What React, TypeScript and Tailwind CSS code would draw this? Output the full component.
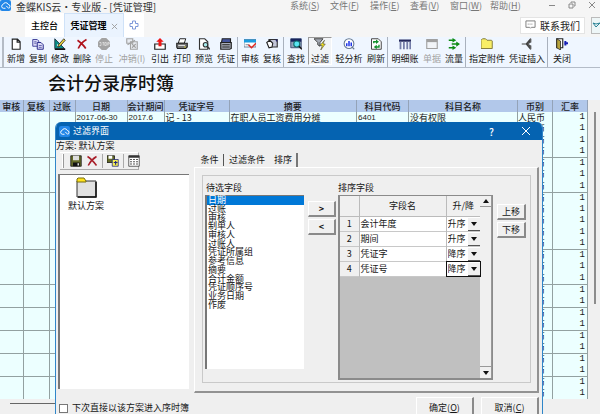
import type { ReactNode } from "react";
import clsx from "clsx";

const menus = [
  ["系统", "S"],
  ["文件", "F"],
  ["操作", "E"],
  ["查看", "V"],
  ["窗口", "W"],
  ["帮助", "H"],
];

function Icon({ children }: { children: ReactNode }) {
  return (
    <svg viewBox="0 0 16 16" className="h-3 w-3 shrink-0" fill="none" aria-hidden="true">
      {children}
    </svg>
  );
}

function CloudIcon() {
  return (
    <svg viewBox="0 0 16 16" className="h-[11px] w-[11px] shrink-0" fill="none" aria-hidden="true">
      <rect width="16" height="16" rx="3" fill="#2387e8" />
      <path d="M8 12H5a2.800 2.800 0 0 1-.5-5.500A4 4 0 0 1 12 6.500a2.800 2.800 0 0 1 .5 5.500L9 8.500" stroke="#fff" strokeWidth="1.400" />
    </svg>
  );
}

const icons: Record<string, ReactNode> = {
  add: <path d="M3 1.5h7l3.500 3.500v10H3zM9.500 1.500v4h4" fill="#fff" stroke="#222" strokeWidth="1.500" />,
  copy: (
    <>
      <path d="M1 2h6l2 2v7H1z" fill="#d9d9f5" stroke="#46469c" strokeWidth="1.300" />
      <path d="M7 6h5l3 3v6H7z" fill="#d9d9f5" stroke="#2b2b8c" strokeWidth="1.300" />
      <path d="M3 5h3M3 7h3M9 10h4M9 12.500h4" stroke="#46469c" />
    </>
  ),
  edit: (
    <>
      <path d="M1 1v13h13z" fill="#0c8d86" stroke="#123" />
      <path d="M4 8v3h4z" fill="#eff6ff" />
      <path d="M6 9l7-8 2 2-7 8-3 1z" fill="#e8cf3c" stroke="#222" />
      <path d="M1 15h14" stroke="#111" strokeWidth="2" />
    </>
  ),
  remove: <path d="M2 3c4 3 8 6 11 11M14 2C9 5 5 9 3 14" stroke="#b0141d" strokeWidth="2.200" />,
  stop: (
    <>
      <path d="M5 0h6l5 5v6l-5 5H5l-5-5V5z" fill="#a3a3a3" />
      <path d="M2 6h2v4H2M6 6h2M7 6v4M9 6h2v4H9zM13 10V6h2v2h-2" stroke="#e6e6e6" />
    </>
  ),
  reverse: (
    <>
      <path d="M1 1h8v6H1zM6 5h9v10H6z" fill="#e9edf3" stroke="#a2a2a2" strokeWidth="1.500" />
      <path d="M2 9l10-6M8 8l5 5M13 8l-5 5" stroke="#a2a2a2" strokeWidth="1.500" />
    </>
  ),
  exportOut: (
    <>
      <path d="M1 8h14v7H1z" fill="#fff" stroke="#222" strokeWidth="1.600" />
      <path d="M8 0l5 5h-3v6H6V5H3z" fill="#ef1616" />
    </>
  ),
  print: (
    <>
      <path d="M5 1h8l-2 6H3z" fill="#fff" stroke="#222" strokeWidth="1.300" />
      <path d="M1 7h14v5l-2 2H2l-1-2z" fill="#777" stroke="#222" strokeWidth="1.500" />
      <path d="M3 10h9" stroke="#fff" />
      <path d="M11 12h2" stroke="#e4d92b" strokeWidth="1.500" />
    </>
  ),
  preview: (
    <>
      <path d="M2 1h7l4 4v10H2z" fill="#fff" stroke="#333" strokeWidth="1.500" />
      <circle cx="10" cy="9" r="3" fill="#a8eced" stroke="#333" strokeWidth="1.500" />
      <path d="M12 11l4 4" stroke="#333" strokeWidth="2" />
    </>
  ),
  voucher: (
    <>
      <path d="M3 1h11v5H2z" fill="#44549c" stroke="#222" strokeWidth="1.500" />
      <path d="M1 6h14v8l-2 1H1z" fill="#a9adb9" stroke="#222" strokeWidth="1.600" />
      <path d="M3 9h10M3 12h10" stroke="#222" strokeWidth="1.500" />
    </>
  ),
  audit: (
    <>
      <path d="M0 2h16v10H0z" fill="#fff" stroke="#45617e" />
      <path d="M0 2h16v4H0z" fill="#1b9de0" />
      <path d="M2 9h5" stroke="#53637a" />
      <path d="M6 9l4 4 6-6" stroke="#e02b24" strokeWidth="2" />
    </>
  ),
  recheck: (
    <>
      <path d="M4 2h11v10H6z" fill="#c3c6d8" stroke="#333" strokeWidth="1.500" />
      <path d="M1 6l4-3 4 4-1 5-4 1z" fill="#fff" stroke="#222" strokeWidth="1.500" />
      <path d="M12 2h3v4z" fill="#26246f" />
    </>
  ),
  find: (
    <>
      <path d="M1 1h14v12H1z" fill="#8fa0b8" stroke="#27335c" />
      <path d="M1 1h14v4H1z" fill="#17245d" />
      <circle cx="9" cy="8" r="4" fill="#59e5f3" stroke="#14706f" strokeWidth="1.500" />
      <path d="M12 11l4 4" stroke="#111" strokeWidth="2" />
    </>
  ),
  filter: (
    <>
      <path d="M0 1h12L8 6v5L5 9V6z" fill="#a6abb5" stroke="#444" strokeWidth="1.300" />
      <path d="M14 3L8 10h3l-2 6 6-8h-3z" fill="#f7e71c" stroke="#333" strokeWidth=".7" />
    </>
  ),
  analyze: (
    <>
      <circle cx="8" cy="7.500" r="6.500" fill="#fff" stroke="#667991" strokeWidth="1.400" />
      <path d="M5 11V7M8 11V4M11 11V6" stroke="#2037e7" strokeWidth="2" />
      <path d="M12 12l3 3" stroke="#667991" strokeWidth="1.500" />
    </>
  ),
  refresh: (
    <>
      <path d="M2 1h9l4 4v10H2z" fill="#fff" stroke="#444" strokeWidth="1.300" />
      <path d="M5 7V5h4M12 9v3H8" stroke="#12912c" strokeWidth="1.800" />
      <path d="M8 2l4 3-4 3zM9 9l-4 3 4 3z" fill="#12912c" />
    </>
  ),
  ledger: (
    <>
      <path d="M0 2h16v3H0z" fill="#24285d" />
      <path d="M2 5v10M6.500 5v10M11 5v10M15 5v10" stroke="#747da9" strokeWidth="2.400" />
    </>
  ),
  bill: (
    <>
      <path d="M1 2h14v12H1z" fill="#f1f4f8" stroke="#a0a0a0" strokeWidth="1.500" />
      <path d="M1 4h14" stroke="#a0a0a0" strokeWidth="3" />
    </>
  ),
  flow: (
    <>
      <path d="M1 3h6M1 13h6M5 8h7" stroke="#0d8b12" strokeWidth="2.200" />
      <path d="M6 0l5 3-5 3zM6 10l5 3-5 3zM11 4.500l5 3.500-5 3.500z" fill="#0d8b12" />
    </>
  ),
  folder: <path d="M0 3l2-2h4l2 2h6l1 1v10H0z" fill="#f8ee67" stroke="#857c3c" strokeWidth="1.300" />,
  insert: (
    <>
      <path d="M1 8h6M7 8l5-6v4L8 8l4 2v4z" fill="#777" stroke="#444" strokeWidth="1.600" />
      <path d="M13 1v5M13 10v5" stroke="#555" strokeWidth="1.600" />
    </>
  ),
  exit: (
    <>
      <path d="M1 1h8v12H1z" fill="#fff" stroke="#222" strokeWidth="1.500" />
      <path d="M1 1l5 3v12l-5-3z" fill="#b7a33d" stroke="#222" />
      <path d="M16 7h-5M12.500 4v6" stroke="#1720b5" strokeWidth="2.600" />
    </>
  ),
};

type Tool = { label: string; icon: string; width: string; off?: boolean; pressed?: boolean };

// Groups are divided by a thin etched line
const toolGroups: Tool[][] = [
  [
    { label: "新增", icon: "add", width: "w-[22px]" },
    { label: "复制", icon: "copy", width: "w-[22px]" },
    { label: "修改", icon: "edit", width: "w-[22px]" },
    { label: "删除", icon: "remove", width: "w-[22px]" },
    { label: "停止", icon: "stop", width: "w-[22px]", off: true },
    { label: "冲销(I)", icon: "reverse", width: "w-[34px]", off: true },
    { label: "引出", icon: "exportOut", width: "w-[22px]" },
    { label: "打印", icon: "print", width: "w-[22px]" },
    { label: "预览", icon: "preview", width: "w-[22px]" },
    { label: "凭证", icon: "voucher", width: "w-[22px]" },
  ],
  [
    { label: "审核", icon: "audit", width: "w-[22px]" },
    { label: "复核", icon: "recheck", width: "w-[22px]" },
  ],
  [
    { label: "查找", icon: "find", width: "w-[22px]" },
    { label: "过滤", icon: "filter", width: "w-6", pressed: true },
    { label: "轻分析", icon: "analyze", width: "w-8" },
    { label: "刷新", icon: "refresh", width: "w-[22px]" },
  ],
  [
    { label: "明细账", icon: "ledger", width: "w-8" },
    { label: "单据", icon: "bill", width: "w-[22px]", off: true },
    { label: "流量", icon: "flow", width: "w-[22px]" },
  ],
  [
    { label: "指定附件", icon: "folder", width: "w-10" },
    { label: "凭证插入", icon: "insert", width: "w-10" },
  ],
  [{ label: "关闭", icon: "exit", width: "w-[26px]" }],
];

const columns = [
  { name: "审核", width: "w-[23px]" },
  { name: "复核", width: "w-[26px]" },
  { name: "过账", width: "w-[26px]" },
  { name: "日期", width: "w-[52px]" },
  { name: "会计期间", width: "w-[35px]" },
  { name: "凭证字号", width: "w-[65px]" },
  { name: "摘要", width: "" },
  { name: "科目代码", width: "w-[52px]" },
  { name: "科目名称", width: "w-[109px]" },
  { name: "币别", width: "w-[35px]" },
  { name: "汇率", width: "w-[35px]" },
];

// One entry per voucher, with the number of its lines
const vouchers = [
  { lines: 4, height: "h-[45px]" },
  { lines: 3, height: "h-[34px]" },
  { lines: 5, height: "h-14" },
  { lines: 3, height: "h-[34px]" },
  { lines: 2, height: "h-[22px]" },
  { lines: 2, height: "h-[22px]" },
  { lines: 2, height: "h-[22px]" },
  { lines: 2, height: "h-[22px]" },
  { lines: 2, height: "h-[22px]" },
];

const firstVoucher = ["", "", "", "2017-06-30", "2017.6", "记 - 13", "在职人员工资费用分摊", "6401", "没有权限"];

const fields = ["日期", "过账", "审核", "制单人", "审核人", "过账人", "凭证所属组", "参考信息", "摘要", "合计金额", "凭证顺序号", "业务日期", "作废"];

const sorts = [
  ["会计年度", "升序"],
  ["期间", "升序"],
  ["凭证字", "降序"],
  ["凭证号", "降序"],
];

function TitleBar() {
  return (
    <header className="flex h-[13px] items-start bg-[#f5f5f5] text-[#777]">
      <CloudIcon />
      <h1 className="ml-[5px] flex-1 whitespace-pre text-[10px] leading-[13px] text-[#333]">金蝶KIS云·专业版 - [凭证管理]</h1>
      <nav className="flex text-[9px] leading-[11px]">
        {menus.map(([name, key]) => (
          <a key={key} href="#menu" className="w-10 whitespace-nowrap">
            {name}(<u>{key}</u>)
          </a>
        ))}
      </nav>
      <div className="flex w-[70px] items-center justify-end gap-3 pr-1">
        <button aria-label="最小化" className="h-[10px] w-2">
          <svg viewBox="0 0 8 8" className="w-2"><path d="M1 4.500h6" stroke="#888" /></svg>
        </button>
        <button aria-label="还原" className="h-[10px] w-2">
          <svg viewBox="0 0 8 8" className="w-2" fill="none"><path d="M1 3h4v4H1zM3 2V1h4v4H6" stroke="#888" /></svg>
        </button>
        <button aria-label="关闭" className="h-[10px] w-2">
          <svg viewBox="0 0 8 8" className="w-2"><path d="M1 1l6 6M7 1L1 7" stroke="#888" /></svg>
        </button>
      </div>
    </header>
  );
}

function TabStrip() {
  return (
    <div className="flex h-6 items-stretch bg-[#f5f5f5] pl-[25px] text-[9px]">
      <button className="w-[39px] bg-white pt-0.5 font-medium">主控台</button>
      <button className="flex w-[60px] items-center justify-center gap-1 border border-b-0 border-[#cfe2f8] bg-[#eaf3fe] pt-px font-bold">
        凭证管理
        <svg viewBox="0 0 8 8" className="w-[7px]"><path d="M1 1l6 6M7 1L1 7" stroke="#999" /></svg>
      </button>
      <button aria-label="新标签" className="flex w-5 items-center justify-center bg-white">
        <svg viewBox="0 0 10 10" className="w-[10px]" fill="#fff">
          <path d="M3.500 1h3v2.500H9v3H6.500V9h-3V6.500H1v-3h2.500z" stroke="#7e98d8" />
        </svg>
      </button>
      <div className="flex flex-1 items-center justify-end gap-1.5">
        <button className="flex h-[17px] w-[65px] items-center justify-center gap-1 border border-[#e4e4e4] bg-white text-[10px] text-[#222]">
          <svg viewBox="0 0 12 10" className="w-[11px]" fill="none">
            <path d="M1 1h10v7H7L6 9 5 8H1z" stroke="#777" />
            <path d="M3 4.500h6" stroke="#777" strokeDasharray="1 1" />
          </svg>
          联系我们
        </button>
        <button aria-label="消息" className="h-[17px] w-[9px] overflow-hidden border border-r-0 border-[#bbb] bg-[#eef6f7]">
          <svg viewBox="0 0 8 14" className="w-2" fill="none"><path d="M1 5l3 4 4-4M1 5l3 1 4-1" stroke="#2a8295" /></svg>
        </button>
      </div>
    </div>
  );
}

function Toolbar() {
  return (
    <div className="flex h-[31px] overflow-hidden border-b border-[#b4bcc8] bg-[#eff6ff] pl-0.5">
      <span className="mr-px w-0.5 border-x border-[#b5bcc6]" />
      {toolGroups.map((group, i) => (
        <div key={i} className={clsx("flex shrink-0", i > 0 && "border-l border-[#a9b1bd] pl-px")}>
          {group.map((tool) => (
            <button
              key={tool.label}
              className={clsx(
                "flex shrink-0 flex-col items-center whitespace-nowrap text-[9px] leading-[14px]",
                tool.width,
                tool.pressed ? "mx-px mb-0.5 border border-b-white border-l-[#999] border-r-white border-t-[#999] bg-[#f2f4f7]" : "pt-px",
                tool.off ? "text-[#a2a2a2]" : "text-[#161616]"
              )}
            >
              <Icon>{icons[tool.icon]}</Icon>
              <span className="pt-0.5">{tool.label}</span>
            </button>
          ))}
        </div>
      ))}
    </div>
  );
}

function Ledger() {
  return (
    <div className="flex bg-[#f0f0f0]">
      <table className="min-w-0 flex-1 table-fixed border-collapse whitespace-nowrap text-[9px] leading-[11px] text-[#1b1b1b]">
        <thead>
          <tr className="h-3 bg-[#b2c8ea]">
            {columns.map((col) => (
              <th key={col.name} className={clsx("border-r border-[#94a3b8] p-0 font-medium", col.width)}>
                {col.name}
              </th>
            ))}
          </tr>
        </thead>
        <tbody>
          {vouchers.map((voucher, row) => (
            <tr key={row} className={clsx("border-b border-[#93a1a1] bg-[#ecffff] align-top last:border-b-0", voucher.height)}>
              {firstVoucher.map((text, col) => (
                <td
                  key={col}
                  className={clsx(
                    "overflow-hidden border-r border-[#93a1a1] p-0 pl-px",
                    (col === 3 || col === 4 || col === 7) && "font-['Liberation_Sans','Noto_Sans_CJK_SC',sans-serif] text-[8px]"
                  )}
                >
                  {row === 0 && text}
                </td>
              ))}
              <td className="overflow-hidden border-r border-[#93a1a1] p-0">
                <div className={clsx("flex flex-col justify-around overflow-hidden", voucher.height)}>
                  {Array.from({ length: voucher.lines }, (_, n) => (
                    <span key={n}>人民币</span>
                  ))}
                </div>
              </td>
              <td className="border-r border-[#93a1a1] p-0 pr-0.5 text-right font-['Liberation_Mono',monospace]">
                <div className={clsx("flex flex-col justify-around overflow-hidden", voucher.height)}>
                  {Array.from({ length: voucher.lines }, (_, n) => (
                    <span key={n}>1</span>
                  ))}
                </div>
              </td>
            </tr>
          ))}
        </tbody>
      </table>
      <div className="w-3 shrink-0 pl-1.5 pt-3">
        <div className="h-48 w-0.5 bg-[#8d8d8d]" />
      </div>
    </div>
  );
}

function PushButton({ children, className }: { children: ReactNode; className?: string }) {
  return (
    <button className={clsx("flex items-center justify-center border border-b-2 border-r-2 border-[#8a8a8a] border-l-white border-t-white bg-[#f0f0f0]", className)}>
      {children}
    </button>
  );
}

function SchemePane() {
  return (
    <div className="w-[138px] shrink-0">
      <p className="h-3 leading-3">方案: 默认方案</p>
      <div className="ml-1 flex h-[18px] w-[79px] items-center border-b border-r border-t border-b-[#aaa] border-r-[#aaa] border-t-white">
        <span className="ml-0.5 mr-1.5 h-[14px] w-0.5 shrink-0 border-x border-l-white border-r-[#999]" />
        <button aria-label="保存"><Icon>
          <path d="M1 1h14v14H1z" fill="#646b28" stroke="#111" />
          <path d="M4 1h8v6H4z" fill="#ddd" />
          <path d="M4 10h9v5H4z" fill="#111" />
          <path d="M10 11h2v3h-2z" fill="#ddd" />
        </Icon></button>
        <button aria-label="删除" className="ml-1"><Icon>
          <path d="M2 2c5 3 9 8 12 12M14 2C9 5 5 10 3 14" stroke="#a9202b" strokeWidth="2" />
        </Icon></button>
        <span className="mx-1 h-[14px] w-px shrink-0 bg-[#aaa]" />
        <button aria-label="另存为"><Icon>
          <path d="M0 1h10v9H0z" fill="#646b28" stroke="#111" />
          <path d="M2 1h5v4H2z" fill="#fff" />
          <path d="M7 6h8v9H7z" fill="#f7ef52" stroke="#1b2380" />
          <path d="M9 10h5M11.500 8v5" stroke="#1b2380" strokeWidth="1.500" />
        </Icon></button>
        <span className="mx-1 h-[14px] w-px shrink-0 bg-[#aaa]" />
        <button aria-label="列表"><Icon>
          <path d="M1 1h14v14H1z" fill="#fff" stroke="#333" />
          <path d="M1 2h14" stroke="#333" strokeWidth="3" />
          <path d="M3 6h2M7 6h2M11 6h2M3 9h2M7 9h2M11 9h2M3 12h2M7 12h2M11 12h2" stroke="#222" strokeWidth="1.500" />
        </Icon></button>
      </div>
      <div className="ml-0.5 mt-1 h-[215px] w-[131px] border-l-2 border-t border-[#777] bg-white pt-0.5">
        <button className="ml-2 flex w-9 flex-col items-center">
          <svg viewBox="0 0 21 21" className="w-[21px]" aria-hidden="true">
            <path d="M1 4h19v16H1z" fill="#e1e1e1" stroke="#333" />
            <path d="M20 5v15H2" fill="none" stroke="#111" strokeWidth="1.500" />
            <path d="M1 5V2l1-1h6l2 3v1z" fill="#ffe21c" stroke="#776c10" />
          </svg>
          <span className="mt-0.5 whitespace-nowrap leading-3">默认方案</span>
        </button>
      </div>
    </div>
  );
}

function FieldList() {
  return (
    <div className="w-[99px] shrink-0">
      <p id="pending" className="mb-px ml-px leading-3">待选字段</p>
      <div className="h-[174px] border-l-2 border-t border-[#777] bg-white">
        <ul role="listbox" aria-labelledby="pending" className="grid h-[113px] auto-rows-fr">
          {fields.map((field, i) => (
            <li
              key={field}
              role="option"
              aria-selected={i === 0}
              className={clsx("flex items-center pl-px leading-[8px]", i === 0 && "bg-[#0078d7] text-white")}
            >
              {field}
            </li>
          ))}
        </ul>
      </div>
    </div>
  );
}

function Arrow({ up }: { up?: boolean }) {
  return (
    <svg viewBox="0 0 6 4" className="h-1 w-1.5" aria-hidden="true">
      <path d={up ? "M0 4l3-4 3 4z" : "M0 0h6L3 4z"} fill="#111" />
    </svg>
  );
}

function SortTable() {
  return (
    <div className="ml-0.5 min-w-0 flex-1">
      <p className="mb-px leading-3">排序字段</p>
      <div className="flex h-[185px] border border-b-2 border-l-2 border-[#8b8b8b] bg-[#c0c0c0]">
        <div className="flex-1">
          <table className="w-full table-fixed border-collapse bg-white">
            <thead>
              <tr className="h-5 bg-[#f0f0f0]">
                <th className="w-[19px] border-b border-r border-[#bbb] p-0" />
                <th className="border-b border-r border-[#bbb] p-0 font-normal">字段名</th>
                <th className="w-[34px] border-b border-[#bbb] p-0 font-normal">升/降</th>
              </tr>
            </thead>
            <tbody>
              {sorts.map(([field, order], i) => (
                <tr key={field} className="h-[15px] border-b border-[#c8c8c8]">
                  <td className="border-r border-[#bbb] bg-[#f0f0f0] p-0 text-center">{i + 1}</td>
                  <td className="border-r border-[#bbb] p-0 pl-px">{field}</td>
                  <td className="p-0">
                    <div className={clsx("relative flex h-[14px]", i === 3 && "outline outline-[#111]")}>
                      <select aria-label={field + "排序"} defaultValue={order} className="w-full appearance-none pl-px leading-[13px] outline-none">
                        <option>升序</option>
                        <option>降序</option>
                      </select>
                      <span className="pointer-events-none absolute bottom-0 right-0 flex h-[13px] w-3 items-center justify-center border-b border-[#555] bg-[#f0f0f0]">
                        <Arrow />
                      </span>
                    </div>
                  </td>
                </tr>
              ))}
            </tbody>
          </table>
        </div>
        <div className="flex w-3 flex-col justify-between border-r border-[#999] bg-[#f0f0f0]">
          <button aria-label="向上滚动" className="flex h-[11px] items-center justify-center border-b border-[#999]"><Arrow up /></button>
          <button aria-label="向下滚动" className="flex h-3 items-center justify-center border-t border-[#999]"><Arrow /></button>
        </div>
      </div>
    </div>
  );
}

function FilterDialog() {
  return (
    <section role="dialog" aria-label="过滤界面" className="absolute left-[55px] right-[57px] top-[122px] overflow-hidden rounded-t-md border-x border-[#2f86c9] bg-[#efefef] text-[9px] text-[#161616]">
      <div className="flex h-[18px] items-center bg-[#0563b1] pl-[3px] pr-3 text-white">
        <CloudIcon />
        <h2 className="ml-[3px] flex-1">过滤界面</h2>
        <button aria-label="帮助" className="mr-7 text-[10px] font-medium">?</button>
        <button aria-label="关闭">
          <svg viewBox="0 0 8 8" className="w-2"><path d="M0 0l8 8M8 0L0 8" stroke="#fff" /></svg>
        </button>
      </div>
      <div className="flex">
        <SchemePane />
        <div className="min-w-0 flex-1 pr-[3px] pt-3">
          <div role="tablist" className="flex h-[15px] items-center pl-0.5">
            <button role="tab" aria-selected="false" className="h-3 w-7 border-r border-[#555] leading-3">条件</button>
            <button role="tab" aria-selected="false" className="h-3 w-[46px] leading-3">过滤条件</button>
            <button role="tab" aria-selected="true" className="h-[14px] w-7 border-r-2 border-[#777] leading-3">排序</button>
          </div>
          <div className="border-b-2 border-l border-r-2 border-t border-b-[#929292] border-l-white border-r-[#929292] border-t-white pb-2 pl-[7px] pr-1.5 pt-[7px]">
            <fieldset className="flex h-[208px] min-w-0 border border-[#c9c9c9] pl-0.5 pr-1 pt-1.5">
              <FieldList />
              <div className="ml-1 flex w-7 shrink-0 flex-col gap-0.5 pt-[19px]">
                <PushButton className="h-4 font-bold">&gt;</PushButton>
                <PushButton className="h-4 border-l-[#8a8a8a] border-t-[#8a8a8a] font-bold">&lt;</PushButton>
              </div>
              <SortTable />
              <div className="ml-1 flex w-[29px] shrink-0 flex-col gap-0.5 pt-[22px]">
                <PushButton className="h-4">上移</PushButton>
                <PushButton className="h-4">下移</PushButton>
              </div>
            </fieldset>
          </div>
        </div>
      </div>
      <div className="flex h-8 items-start gap-[7px] px-[3px] pt-1">
        <label className="flex flex-1 items-center gap-1 pt-[5px] leading-3">
          <input type="checkbox" className="h-[9px] w-[9px] appearance-none border border-[#777] bg-white" />
          下次直接以该方案进入序时簿
        </label>
        <PushButton className="h-[22px] w-[58px]">确定(<u>O</u>)</PushButton>
        <PushButton className="h-[22px] w-[58px]">取消(<u>C</u>)</PushButton>
      </div>
    </section>
  );
}

export default function App() {
  return (
    <main className="relative h-screen overflow-hidden bg-[#f0f0f0] font-['Noto_Sans_CJK_SC',sans-serif]">
      <TitleBar />
      <TabStrip />
      <Toolbar />
      <div className="flex h-8 items-center bg-[#eff6ff] pl-12">
        <h2 className="font-['Liberation_Serif','Noto_Sans_CJK_SC',serif] text-lg font-medium leading-6 text-[#111]">会计分录序时簿</h2>
      </div>
      <Ledger />
      <div className="ml-[10px] mt-1 w-1/2 border-t border-[#666]" />
      <FilterDialog />
    </main>
  );
}
